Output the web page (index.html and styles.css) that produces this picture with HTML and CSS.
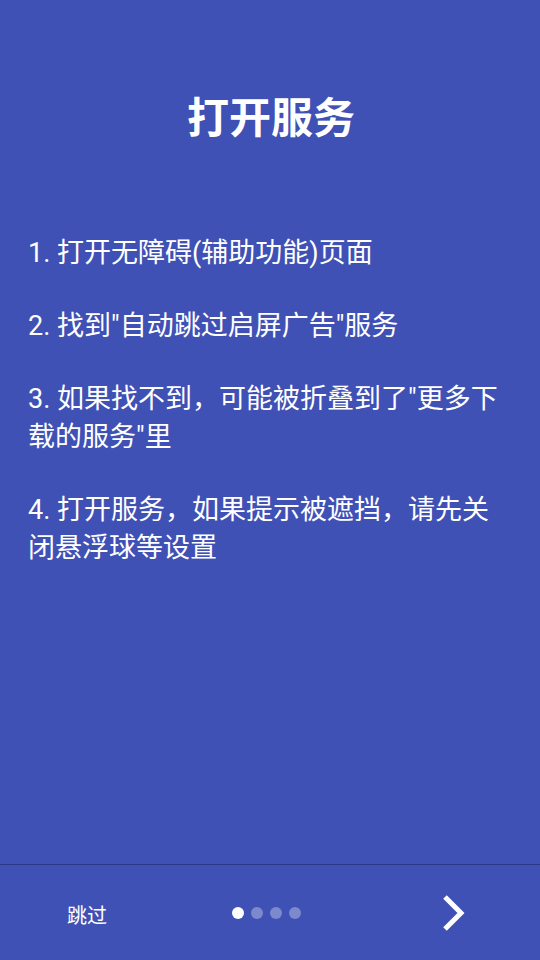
FILE: index.html
```html
<!DOCTYPE html>
<html lang="zh-CN">
<head>
<meta charset="utf-8">
<title>打开服务</title>
<link rel="stylesheet" href="styles.css">
</head>
<body>
<div class="screen">
  <main class="content">
    <h1 class="title">打开服务</h1>
    <div class="steps">
      <p class="step">1. 打开无障碍(辅助功能)页面</p>
      <p class="step">2. 找到"自动跳过启屏广告"服务</p>
      <p class="step">3. 如果找不到，可能被折叠到了"更多下<br>载的服务"里</p>
      <p class="step">4. 打开服务，如果提示被遮挡，请先关<br>闭悬浮球等设置</p>
    </div>
  </main>
  <footer class="footer">
    <div class="skip">跳过</div>
    <div class="dots">
      <span class="dot active"></span>
      <span class="dot"></span>
      <span class="dot"></span>
      <span class="dot"></span>
    </div>
    <div class="next">
      <svg class="chevron" width="24" height="40" viewBox="0 0 24 40">
        <polyline points="4,4 20,20 4,36" fill="none" stroke="#ffffff" stroke-width="5" stroke-linecap="butt" stroke-linejoin="miter"/>
      </svg>
    </div>
  </footer>
</div>
</body>
</html>
```
FILE: styles.css
```css
html, body {
  margin: 0;
  padding: 0;
}
body {
  background: #3f51b5;
  font-family: Roboto, "Noto Sans CJK SC", sans-serif;
  color: #ffffff;
}
.screen {
  width: 540px;
  height: 960px;
  display: flex;
  flex-direction: column;
  background: #3f51b5;
}
.content {
  flex: 1;
  padding: 94px 28px 0 28px;
}
.title {
  margin: 0;
  font-size: 42px;
  line-height: 50px;
  font-weight: bold;
  text-align: center;
  padding-left: 2px;
}
.steps {
  margin-top: 90px;
  display: flex;
  flex-direction: column;
  gap: 35px;
}
.step {
  margin: 0;
  font-size: 27px;
  line-height: 38px;
  white-space: nowrap;
}
.footer {
  height: 95px;
  border-top: 1px solid #2a3886;
  display: grid;
  grid-template-columns: 174px 1fr 174px;
  align-items: center;
}
.skip {
  text-align: center;
  font-size: 20px;
  line-height: 24px;
  font-family: "Noto Sans CJK SC", sans-serif;
  padding-top: 4px;
}
.dots {
  display: flex;
  justify-content: center;
  gap: 7px;
  padding-right: 7px;
}
.dot {
  width: 12px;
  height: 12px;
  border-radius: 50%;
  background: rgba(255, 255, 255, 0.32);
}
.dot.active {
  background: #ffffff;
}
.next {
  display: flex;
  justify-content: center;
  align-items: center;
}
.chevron {
  display: block;
}
```
